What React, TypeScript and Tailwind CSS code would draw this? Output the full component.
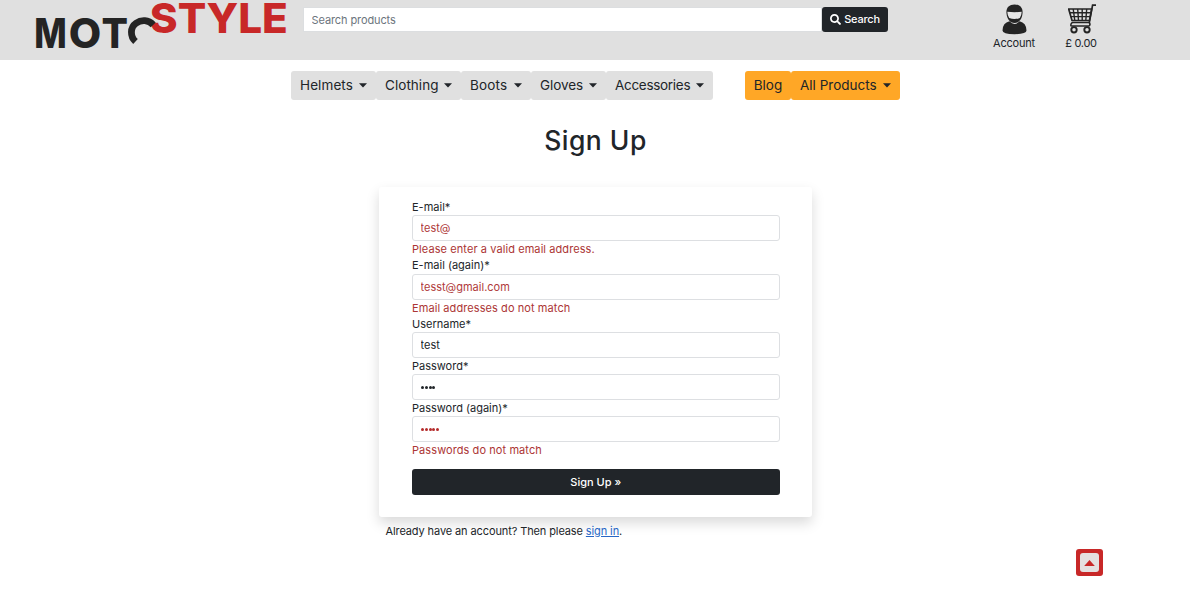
import React from "react";
import { FaSearch } from "react-icons/fa";

const navItems = [
  { label: "Helmets", box: "w-[85px]", text: "tracking-[0.1px]" },
  { label: "Clothing", box: "w-[85px]", text: "tracking-[0.05px]" },
  { label: "Boots", box: "w-[70px]", text: "tracking-[0.15px]" },
  { label: "Gloves", box: "w-[75px]", text: "tracking-[-0.05px]" },
  { label: "Accessories", box: "w-[107px]", text: "tracking-[-0.3px]" },
];

function Caret() {
  return (
    <svg className="mb-0.5 h-[5px] w-2 shrink-0" viewBox="0 0 8 5">
      <path d="M0 .3h8L4 4.5z" fill="currentColor" />
    </svg>
  );
}

function Logo() {
  return (
    <svg className="ml-[34px] h-[60px] w-[255px] shrink-0 overflow-visible" viewBox="34 0 255 60">
      <g fontFamily="Inter, sans-serif" fontWeight="800">
        <g fill="#242424" fontSize="40.5">
          <text x="34.3" y="47.8" textLength="32.5" lengthAdjust="spacingAndGlyphs">M</text>
          <text x="68.8" y="47.8" textLength="32.5" lengthAdjust="spacingAndGlyphs">O</text>
          <text x="101.4" y="47.8" textLength="26.500" lengthAdjust="spacingAndGlyphs">T</text>
        </g>
        <text x="149.8" y="32.8" fontSize="41.5" fill="#c82828" textLength="138" lengthAdjust="spacingAndGlyphs">STYLE</text>
      </g>
      <path d="M135.500 41.600C130 36.500 130 27.500 136 23.300C141.500 19.300 148.500 19.800 153.200 24.800" fill="none" stroke="#242424" strokeWidth="6.800" />
    </svg>
  );
}

function RiderIcon() {
  return (
    <svg className="h-[31px] w-[25px]" viewBox="0 0 25 31">
      <path d="M12.500.5C7 .5 3.800 4 4.500 9.500C5 15 8 19 12.500 19S20 15 20.500 9.500C21.200 4 18 .5 12.500.5z" fill="#242424" />
      <path d="M5.300 7.800Q12.500 8.500 19.700 7.800Q19.600 11.500 17.800 14Q12.500 16.200 7.200 14Q5.400 11.500 5.300 7.800z" fill="#e5e5e5" />
      <path d="M7.500 17.300Q12.500 22.500 17.500 17.300Q24.300 18.800 24.500 26.500Q24.500 30 12.500 30.300Q.5 30 .5 26.500Q.7 18.800 7.500 17.300z" fill="#242424" />
    </svg>
  );
}

function CartIcon() {
  return (
    <svg className="h-[30px] w-7" viewBox="0 0 28 30" fill="none" stroke="#242424">
      <path d="M28 1.200h-3.400L21.300 18.500H4" strokeWidth="1.700" />
      <path d="M.7 5h23L21.500 16.500H4z" strokeWidth="1.700" />
      <path d="M1.500 8.800h21.200M2.700 12.600h19.500M5.200 5l1.600 11.500M9.700 5l.8 11.500M14.200 5v11.500M18.700 5l-.9 11.500" strokeWidth="1.400" />
      <path d="M4 18.500q-2.500 3.500 0 3.500h17q1.800-1.200.3-3.500" strokeWidth="1.500" />
      <circle cx="6" cy="25.800" r="2.700" strokeWidth="1.900" />
      <circle cx="19" cy="25.800" r="2.700" strokeWidth="1.900" />
    </svg>
  );
}

type FieldProps = {
  label: string;
  value: string;
  masked?: boolean;
  error?: string;
};

function Field({ label, value, masked = false, error }: FieldProps) {
  return (
    <div>
      <label className="block h-[16.200px] whitespace-nowrap leading-[16.200px]">{label}</label>
      {masked ? (
        <div className={`flex h-[26px] items-center gap-[0.8px] rounded-[3px] border border-[#dddfe2] pl-2 ${error ? "text-[#b52b2b]" : "text-[#212529]"}`}>
          {value.split("").map((_, i) => (
            <span key={i} className="size-[3px] rounded-full bg-current" />
          ))}
        </div>
      ) : (
        <input
          type="text"
          defaultValue={value}
          className={`block h-[26px] w-full rounded-[3px] border border-[#dddfe2] px-[7.500px] outline-none ${error ? "text-[#b03a3a]" : "text-[#212529]"}`}
        />
      )}
      {error && <p className="h-[16.200px] whitespace-nowrap leading-[16.200px] tracking-[0.08px] text-[#ac3535]">{error}</p>}
    </div>
  );
}

export default function App() {
  return (
    <div className="h-[592px] overflow-hidden bg-white font-['Inter',sans-serif] text-[11px] text-[#212529]">
      <header className="flex h-[60px] items-start bg-[#e0e0e0]">
        <Logo />
        <div className="ml-[14px] mt-[7px] flex h-[25px] w-[585px]">
          <input placeholder="Search products" className="h-[25px] min-w-0 flex-1 border border-[#dcdee0] bg-white px-[7.500px] tracking-[-0.1px] outline-none placeholder:text-[#6c757d]" />
          <button className="flex w-[66px] items-center justify-center gap-[3px] rounded-[3px] bg-[#212529] font-medium tracking-[-0.2px] text-white">
            <FaSearch className="size-[11px]" />
            <span>Search</span>
          </button>
        </div>
        <div className="ml-[95px] mt-1 flex w-[62px] flex-col items-center">
          <RiderIcon />
          <span className="mt-px leading-[14px] tracking-[-0.2px]">Account</span>
        </div>
        <div className="ml-[6px] mt-1 flex w-[60px] flex-col items-center">
          <div className="ml-[2px] h-[30px]"><CartIcon /></div>
          <span className="mt-0.5 leading-[14px] tracking-[-0.3px]">£ 0.00</span>
        </div>
      </header>

      <nav className="ml-[291px] mt-[11px] flex h-[29px] text-[13.500px] leading-none">
        {navItems.map((item) => (
          <button key={item.label} className={`flex items-center justify-between rounded-[3px] bg-[#e0e0e0] px-[9px] pt-px ${item.box}`}>
            <span className={item.text}>{item.label}</span>
            <Caret />
          </button>
        ))}
        <button className="ml-8 w-[46px] rounded-[3px] bg-[#ffa726] pt-px">Blog</button>
        <button className="flex w-[109px] items-center justify-between rounded-[3px] bg-[#ffa726] px-[9px] pt-px">
          <span>All Products</span>
          <Caret />
        </button>
      </nav>

      <h1 className="mt-[22px] h-9 pl-px text-center text-[26.500px] font-medium leading-9 tracking-[0.5px]">Sign Up</h1>

      <main className="ml-[379px] mt-[29px] h-[330px] w-[433px] rounded-[3px] bg-white pl-[33px] pr-[32.500px] pt-3 shadow-[0_6px_13px_rgba(0,0,0,0.15)]">
        <form onSubmit={(e) => e.preventDefault()}>
          <Field label="E-mail*" value="test@" error="Please enter a valid email address." />
          <Field label="E-mail (again)*" value="tesst@gmail.com" error="Email addresses do not match" />
          <Field label="Username*" value="test" />
          <Field label="Password*" value="aaaa" masked />
          <Field label="Password (again)*" value="aaaaa" masked error="Passwords do not match" />
          <button className="mt-[10.700px] h-[26px] w-full rounded-[3px] bg-[#212529] pt-px font-medium text-white">Sign Up »</button>
        </form>
      </main>

      <p className="ml-[385.500px] mt-[6px] whitespace-nowrap leading-4 tracking-[-0.11px]">
        Already have an account? Then please <a href="#" className="text-[#2867c5] underline">sign in</a>.
      </p>

      <a href="#" aria-label="Back to top" className="ml-[1075.500px] mt-[10px] flex size-[27px] items-center justify-center rounded-[3px] bg-[#c82828]">
        <span className="flex size-[19px] items-center justify-center rounded-[3px] bg-[#e5e0e0] text-[#c82828]">
          <svg className="h-[6px] w-[11px]" viewBox="0 0 11 6">
            <path d="M5.500 0L10.800 6H.2z" fill="currentColor" />
          </svg>
        </span>
      </a>
    </div>
  );
}
